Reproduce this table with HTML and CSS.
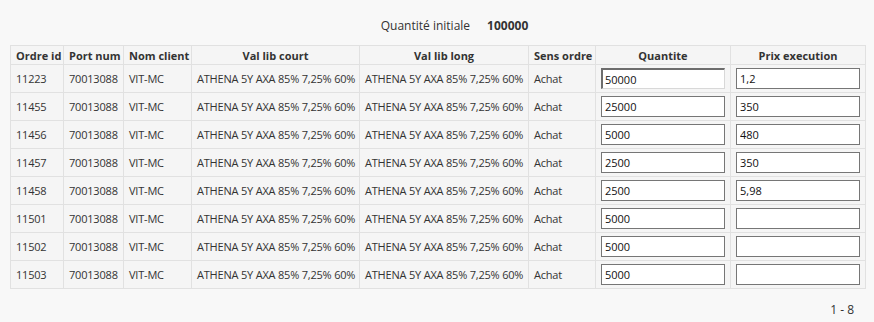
FILE: index.html
```html
<!DOCTYPE html>
<html lang="fr">
<head>
<meta charset="utf-8">
<link rel="stylesheet" href="styles.css">
</head>
<body>
<div class="page">
  <div class="summary">
    <span class="summary-label">Quantité initiale</span>
    <span class="summary-value">100000</span>
  </div>
  <table class="grid">
    <colgroup>
      <col class="c-id"><col class="c-port"><col class="c-client"><col class="c-court"><col class="c-long"><col class="c-sens"><col class="c-qte"><col class="c-prix">
    </colgroup>
    <thead>
      <tr>
        <th>Ordre id</th><th>Port num</th><th>Nom client</th><th class="center">Val lib court</th><th class="center">Val lib long</th><th>Sens ordre</th><th class="center">Quantite</th><th class="center">Prix execution</th>
      </tr>
    </thead>
    <tbody>
      <tr><td>11223</td><td>70013088</td><td>VIT-MC</td><td>ATHENA 5Y AXA 85% 7,25% 60%</td><td>ATHENA 5Y AXA 85% 7,25% 60%</td><td>Achat</td><td class="in"><input class="field field-active" value="50000"></td><td class="in"><input class="field" value="1,2"></td></tr>
      <tr><td>11455</td><td>70013088</td><td>VIT-MC</td><td>ATHENA 5Y AXA 85% 7,25% 60%</td><td>ATHENA 5Y AXA 85% 7,25% 60%</td><td>Achat</td><td class="in"><input class="field" value="25000"></td><td class="in"><input class="field" value="350"></td></tr>
      <tr><td>11456</td><td>70013088</td><td>VIT-MC</td><td>ATHENA 5Y AXA 85% 7,25% 60%</td><td>ATHENA 5Y AXA 85% 7,25% 60%</td><td>Achat</td><td class="in"><input class="field" value="5000"></td><td class="in"><input class="field" value="480"></td></tr>
      <tr><td>11457</td><td>70013088</td><td>VIT-MC</td><td>ATHENA 5Y AXA 85% 7,25% 60%</td><td>ATHENA 5Y AXA 85% 7,25% 60%</td><td>Achat</td><td class="in"><input class="field" value="2500"></td><td class="in"><input class="field" value="350"></td></tr>
      <tr><td>11458</td><td>70013088</td><td>VIT-MC</td><td>ATHENA 5Y AXA 85% 7,25% 60%</td><td>ATHENA 5Y AXA 85% 7,25% 60%</td><td>Achat</td><td class="in"><input class="field" value="2500"></td><td class="in"><input class="field" value="5,98"></td></tr>
      <tr><td>11501</td><td>70013088</td><td>VIT-MC</td><td>ATHENA 5Y AXA 85% 7,25% 60%</td><td>ATHENA 5Y AXA 85% 7,25% 60%</td><td>Achat</td><td class="in"><input class="field" value="5000"></td><td class="in"><input class="field" value=""></td></tr>
      <tr><td>11502</td><td>70013088</td><td>VIT-MC</td><td>ATHENA 5Y AXA 85% 7,25% 60%</td><td>ATHENA 5Y AXA 85% 7,25% 60%</td><td>Achat</td><td class="in"><input class="field" value="5000"></td><td class="in"><input class="field" value=""></td></tr>
      <tr><td>11503</td><td>70013088</td><td>VIT-MC</td><td>ATHENA 5Y AXA 85% 7,25% 60%</td><td>ATHENA 5Y AXA 85% 7,25% 60%</td><td>Achat</td><td class="in"><input class="field" value="5000"></td><td class="in"><input class="field" value=""></td></tr>
    </tbody>
  </table>
  <div class="pager">1 - 8</div>
</div>
</body>
</html>
```

FILE: styles.css
```css
html, body {
  margin: 0;
  padding: 0;
  background: #f8f8f8;
}
body {
  font-family: "Open Sans", "Noto Sans", sans-serif;
  font-size: 11px;
  color: #333;
}
.page {
  padding: 0 9px 0 10px;
}
.summary {
  display: flex;
  justify-content: center;
  gap: 17px;
  padding: 17px 0 0 34px;
  height: 28px;
  box-sizing: border-box;
  font-size: 12px;
}
.summary-value {
  font-weight: 700;
}
.grid {
  border-collapse: collapse;
  width: 855px;
  table-layout: fixed;
  margin-top: 17px;
}
.c-id { width: 53px; }
.c-port { width: 60px; }
.c-client { width: 68px; }
.c-court { width: 168px; }
.c-long { width: 169px; }
.c-sens { width: 67px; }
.c-qte { width: 135px; }
.c-prix { width: 135px; }
.grid th, .grid td {
  border: 1px solid #e1e1e1;
  background: #f5f5f5;
  white-space: nowrap;
  overflow: hidden;
  padding: 0 5px;
  text-align: left;
}
.grid td {
  letter-spacing: -0.2px;
}
.grid th {
  height: 18px;
  font-weight: 700;
}
.grid th.center {
  text-align: center;
}
.grid td {
  height: 27px;
}
.grid td.in {
  padding: 0 5px;
}
.field {
  box-sizing: border-box;
  width: 124px;
  height: 21px;
  margin: 0;
  border: 1px solid #767676;
  background: #fff;
  font-family: inherit;
  font-size: 11px;
  color: #111;
  padding: 0 3px;
  display: block;
}
.field-active {
  border-width: 2px 1px 1px 2px;
  border-color: #6d6d6d #d8d8d8 #d8d8d8 #6d6d6d;
  padding-left: 2px;
}
.pager {
  text-align: right;
  padding: 12px 11px 0 0;
  font-size: 12px;
}
```
